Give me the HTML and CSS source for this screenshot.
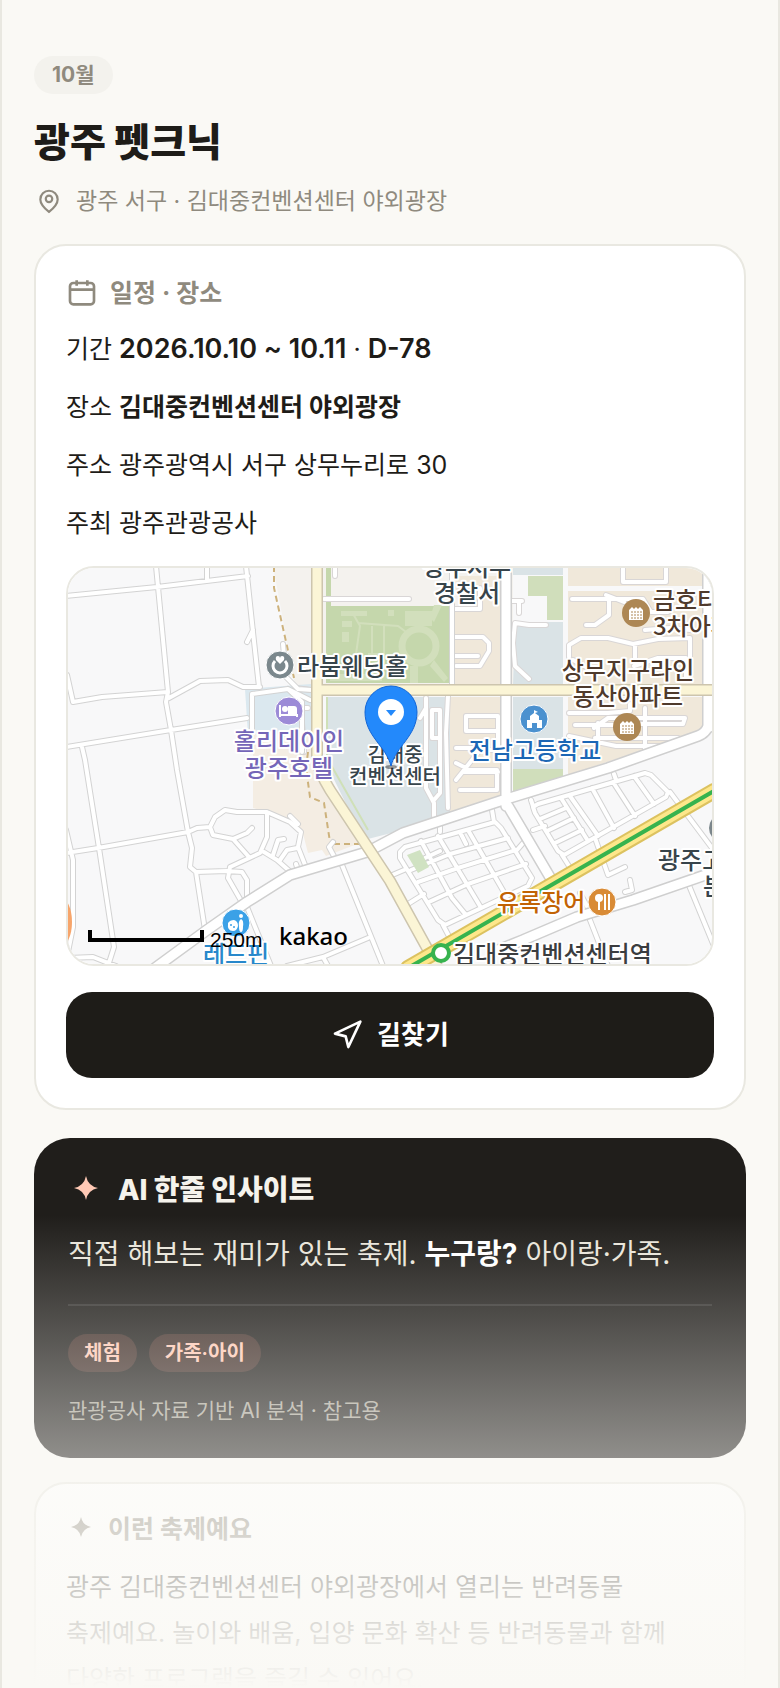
FILE: index.html
```html
<!DOCTYPE html>
<html lang="ko">

<head>
    <meta charset="UTF-8">
    <meta name="viewport" content="width=device-width, initial-scale=1.0">
    <title>광주 펫크닉</title>
    <link rel="stylesheet" href="styles.css">
</head>

<body>

    <main class="screen">
        <header class="hero">
            <span class="month">10월</span>
            <h1 class="title">광주 펫크닉</h1>
            <p class="place">
                <svg class="place-icon" viewBox="0 0 24 24"><path d="M20 10.500c0 5-5.500 9.500-8 11.500-2.500-2-8-6.500-8-11.500a8 8 0 0 1 16 0z"/><circle cx="12" cy="10" r="3"/></svg>
                광주 서구 · 김대중컨벤션센터 야외광장
            </p>
        </header>

        <section class="card">
            <h2 class="card-head">
                <svg class="card-icon" viewBox="0 0 24 24"><rect x="3" y="4.500" width="18" height="16" rx="2.500"/><path d="M8 2.500v4M16 2.500v4M3 9.500h18"/></svg>
                일정 · 장소
            </h2>
            <div class="rows">
                <p>기간 <b class="date">2026.10.10 ~ 10.11</b> · <b class="date">D-78</b></p>
                <p>장소 <b>김대중컨벤션센터 야외광장</b></p>
                <p>주소 광주광역시 서구 상무누리로 30</p>
                <p>주최 광주관광공사</p>
            </div>

            <div class="map">
                <svg class="map-svg" viewBox="0 0 644 396" preserveAspectRatio="xMidYMid slice">
                    <defs>
                        <!-- narrow streets, west side -->
                        <path id="west" d="M-2 28L89 19L180 8M88-2L100 124L98 134L103 162L109 202L120 264L124 280L122 299L128 304L137 362M139-2V12M178-2L185 64L191 119M185 62L179 74M-1 107L5 134L34 129L100 124M101 130L132 113L160 112L175 119H192M-2 179L103 162L179 150M14 179L17 192L31 280L46 379L40 398M-2 285L30 280L120 264L129 260L142 259L147 249L157 242L169 244L199 244L222 254L233 264L230 279L239 302M-2 262L5 292L5 359L0 384M199 244V269L192 285L162 299L160 310L176 338M142 259L145 267L165 271L181 289M165 271L179 265L184 260M196 284L209 292L226 307M205 287L210 272L216 271M212 292L219 282L229 280M228 296L230 302M128 304L159 303L174 304L179 312V332M274 297L315 398M179 339L203 398M219 398L255 389L300 370M255 389L260 398M265 274L261 279L268 292M-2 390L25 389L48 398M222 248L230 256M215 76L216 88"/>
                        <!-- apartment block lanes -->
                        <path id="lanes" d="M267-2V8M256 31H338M256 31H341M386 41H412M412 41V20M386 69H415L421 75V83L412 98H388M386 88H410M454 33H444M451 33V45M478 57H461L447 55L445 75L447 98L461 111M555-2V14H598V-2M504 31H575L583 44H600M541 31V47L527 57H518M538 27L556 34M577 62L602 60L622 62M501 89V77L513 70H540L565 76L590 71L622 70V112M567 76V90M505 92L520 100M566 98L590 90H618V110M358 130V220L366 235V248M352 150L358 140M364 142H372V225L366 232M364 142V170H372M380 128L378 165L380 240M399 148H430V163H398V148M430 163V190M388 180H405M388 212L412 182H430M396 204H430M388 195L402 202H429V222H392M501 145H540L562 143V136M507 157H560M530 155V175M501 168L548 178H600M526 160L540 150H617L615 156H560M577 140V188M527 170H610M240 140H233L236 184M228 120L242 122"/>
                        <!-- housing grids south of the main road -->
                        <path id="grid" d="M332 284L337 279L427 254L433 260L464 310L460 318L377 357L370 352L332 290ZM353 273L384 330L398 347M370 268L412 338M400 262L437 326M357 290L372 283M343 302L382 286L440 270M350 314L390 300L448 282M361 334L400 316L458 296M392 264L398 276M372 264V258M426 254L424 242M322 308L336 302M340 336L356 326M449 282L456 274M465 239L470 236L577 205L583 207L600 224L598 229L496 287L490 283L467 245ZM493 230L520 273M502 228L530 268M524 220L546 260M545 214L567 248M566 208L586 236M472 251L498 240M479 263L506 250M487 275L514 262M465 238L463 232M465 262L477 258M548 212L546 206M494 287L506 306M527 270L540 307L557 299M557 324L564 322L562 312M375 357L384 374M522 352L540 398M620 315L646 378M602 224L644 280M512 325L520 340"/>
                        <!-- wide white roads -->
                        <path id="wide" d="M87 400L139 362L179 334L222 307L299 284L335 265L435 232L540 200L630 168Q638 165 640 158L640-2M438-2V238M440 238L486 316M425 384L455 372L509 349L565 332L646 304M640 160L648 155"/>
                        <path id="hotel" d="M184 162V126L220 121L242 132M220 121L234 134V184M217 108L230 121L244 122"/>
                        <g id="apt"><circle r="14"/><path fill="#fff" d="M-7-3l3-3 2 2 2-2 2 2 2-2 3 3v10H-7z"/><path d="M-5-1H6M-5 2H6M-5 5H6" stroke="#ad8754" stroke-width="1" stroke-dasharray="2 1"/></g>
                    </defs>

                    <rect width="644" height="396" fill="#f8f8f9"/>
                    <path d="M205-2H445V119H250V230L228 122Z" fill="#f4f2ee"/>
                    <path d="M185 165L244 140L250 200L292 275L258 288L254 282L240 285L234 262L199 244L185 240Z" fill="#f4ede3"/>
                    <path d="M177 121L243 116V165L180 167Z" fill="#dbe8ef"/>
                    <path d="M258 38H381V115H258ZM258-2H263V38H258Z" fill="#c5d7ac"/>
                    <g fill="#d2dfbc">
                        <path d="M273 43H299V48H273ZM337 43H364V58H337ZM320 42h6v6h-6zM274 53h10v6h-10zM274 64h7v10h-7zM262 106H314V113H262Z"/>
                        <path d="M366 37H374L366 54L362 50ZM342 98H350V115H342ZM366 92L380 110L376 114L362 98Z"/>
                    </g>
                    <path d="M284 44L292 58L288 86M290 55L330 58L338 64M304 58V90M316 58V86H300" fill="none" stroke="#d2dfbc" stroke-width="2"/>
                    <circle cx="351" cy="78" r="17" fill="none" stroke="#d2dfbc" stroke-width="7"/>
                    <path d="M258 129H388L382 247L335 262L296 272L280 240L258 195Z" fill="#dae3e6"/>
                    <path d="M259 129V190L300 262" fill="none" stroke="#cfe0b8" stroke-width="2"/>
                    <path d="M382 40H433V116H382ZM382 8H433V40H395ZM382 129H433V228L382 244ZM500-2H636V18H500ZM500 23H636V116H500ZM500 129H636V162L500 207Z" fill="#f0e8da"/>
                    <path d="M445-2H495V7H445ZM447 54H495V116H445ZM445 129H495V201H445Z" fill="#dae3e6"/>
                    <path d="M460 8H495V52H479V28H460ZM445 201H495V209L445 225Z" fill="#d0debb"/>
                    <path d="M206-2V20L219 78L226 110M240 184L238 200L242 229L256 235L262 274M266 276H292" fill="none" stroke="#cdb27c" stroke-width="2" stroke-dasharray="6 4"/>

                    <use href="#west" class="road casing-s"/>
                    <use href="#west" class="road fill-s"/>
                    <use href="#lanes" class="road casing-s lane"/>
                    <use href="#lanes" class="road fill-s"/>
                    <use href="#grid" class="road casing-s"/>
                    <use href="#grid" class="road fill-s"/>
                    <path d="M339 287L352 282L361 299L350 305Z" fill="#d0e2c2"/>
                    <path d="M384-2V116" class="road casing-s"/><path d="M384-2V116" class="road fill-s"/>
                    <use href="#hotel" class="road casing-s"/>
                    <use href="#hotel" class="road fill-s"/>
                    <use href="#wide" class="road casing-w"/>
                    <use href="#wide" class="road fill-w"/>

                    <path d="M249-2V192Q250 202 262 222L322 313L370 400M249 122H646" class="road" stroke="#cdc5ae" stroke-width="12"/>
                    <path d="M249-2V192Q250 202 262 222L322 313L370 400M249 122H646" class="road" stroke="#fbf5d6" stroke-width="9"/>
                    <path d="M340 400L646 223" class="road" stroke="#dcc260" stroke-width="16"/>
                    <path d="M340 400L646 223" class="road" stroke="#fee78b" stroke-width="12"/>
                    <path d="M340 400L646 223" class="road" stroke="#37b34e" stroke-width="4"/>
                    <ellipse cx="-7" cy="354" rx="11" ry="24" fill="#f7a56b"/>
                    <circle cx="655" cy="260" r="14" fill="#7b868b"/>

                    <g class="poi">
                        <g transform="translate(212 97)" fill="#7b888d"><circle r="14"/><path d="M-5-4A7 7 0 1 0 5-4" fill="none" stroke="#fff" stroke-width="3"/><path d="M0-1L-4-5Q-5-9-2-9Q0-9 0-7Q0-9 2-9Q5-9 4-5Z" fill="#fff"/></g>
                        <g transform="translate(221 143)" fill="#9c8bd7"><circle r="14"/><path d="M-9-6V6M-9 4H8V6" fill="none" stroke="#fff" stroke-width="2"/><circle cx="-4" cy="-2" r="3" fill="#fff"/><path d="M-1-5H5Q8-5 8-2V3H-1Z" fill="#fff"/></g>
                        <g transform="translate(466 151)" fill="#4b91cf"><circle r="14"/><path d="M-7 9V1H-4V-3L0-6V-9L4-7L1-6L5-3V1H8V9H3V4H-2V9Z" fill="#fff"/></g>
                        <use href="#apt" x="568" y="45" fill="#ad8754"/>
                        <use href="#apt" x="559" y="159" fill="#ad8754"/>
                        <g transform="translate(534 334)" fill="#d98b36"><circle r="14"/><circle cx="-3" cy="-4" r="4" fill="#fff"/><path d="M-3-2V8M3-8V8M7-8V8" stroke="#fff" stroke-width="2"/></g>
                        <g transform="translate(168 355)" fill="#3ba1e7"><circle r="14"/><path d="M-8 0Q-6-3-2-3Q2-2 2 3Q1 8-3 8Q-9 8-8 0ZM5-9a2 2 0 0 1 0 4a2 2 0 0 1 0-4ZM5-4Q8-3 7 4Q7 9 5 9Q3 9 3 4Q2-2 5-4Z" fill="#fff"/><circle cx="-5" cy="2" r="1"/><circle cx="-2" cy="4" r="1"/></g>
                        <circle cx="373" cy="385" r="8" class="station"/>
                    </g>

                    <g class="label">
                        <text x="229" y="107">라붐웨딩홀</text>
                        <text x="399" y="8" text-anchor="middle">광주서부</text>
                        <text x="399" y="34" text-anchor="middle">경찰서</text>
                        <text x="590" y="301">광주고</text>
                        <text x="635" y="327">분</text>
                        <text x="385" y="395" fill="#3b3d40">김대중컨벤션센터역</text>
                        <g fill="#4f3a2c">
                            <text x="585" y="41">금호타운</text>
                            <text x="585" y="67">3차아파트</text>
                            <text x="560" y="111" text-anchor="middle">상무지구라인</text>
                            <text x="560" y="137" text-anchor="middle">동산아파트</text>
                        </g>
                        <g fill="#7566b8" text-anchor="middle">
                            <text x="221" y="182">홀리데이인</text>
                            <text x="221" y="209">광주호텔</text>
                        </g>
                        <text x="467" y="191" text-anchor="middle" fill="#1c67b5">전남고등학교</text>
                        <text x="429" y="343" fill="#c26304">유록장어</text>
                        <text x="168" y="395" text-anchor="middle" fill="#2888cb">레드핀</text>
                        <g class="label-s" text-anchor="middle">
                            <text x="327" y="194">김대중</text>
                            <text x="327" y="216">컨벤션센터</text>
                        </g>
                    </g>

                    <ellipse cx="323" cy="199" rx="6" ry="2" fill="#000" opacity=".4"/>
                    <path d="M323 198C318 178 297 168 297 144A26 26 0 0 1 349 144C349 168 328 178 323 198Z" fill="#2389fb" stroke="#1466d6"/>
                    <circle cx="323" cy="144" r="13" fill="#fff"/>
                    <path d="M318 142H328L323 148Z" fill="#2389fb"/>

                    <path d="M22 362V372H134V362" fill="none" stroke="#000" stroke-width="4"/>
                    <text x="142" y="379" class="scale">250m</text>
                    <text x="211" y="377" class="kakao">kakao</text>
                </svg>
            </div>

            <button class="route-btn" type="button">
                <svg class="route-icon" viewBox="0 0 24 24"><path d="M3 11L22 2L13 21L11 13Z"/></svg>
                길찾기
            </button>
        </section>

        <section class="insight">
            <h2 class="insight-head">
                <svg class="spark" viewBox="0 0 24 24"><path d="M12 0Q14 10 24 12Q14 14 12 24Q10 14 0 12Q10 10 12 0Z"/></svg>
                AI 한줄 인사이트
            </h2>
            <p class="insight-text">직접 해보는 재미가 있는 축제. <b>누구랑?</b> 아이랑·가족.</p>
            <div class="tags">
                <span class="tag">체험</span>
                <span class="tag">가족·아이</span>
            </div>
            <p class="note">관광공사 자료 기반 AI 분석 · 참고용</p>
        </section>

        <section class="card about">
            <h2 class="card-head">
                <svg class="spark spark-s" viewBox="0 0 24 24"><path d="M12 0Q14 10 24 12Q14 14 12 24Q10 14 0 12Q10 10 12 0Z"/></svg>
                이런 축제예요
            </h2>
            <p class="about-text">광주 김대중컨벤션센터 야외광장에서 열리는 반려동물 축제예요. 놀이와 배움, 입양 문화 확산 등 반려동물과 함께 다양한 프로그램을 즐길 수 있어요.</p>
        </section>

        <div class="fade"></div>
    </main>

</body>

</html>
```
FILE: styles.css
```css
* {
    box-sizing: border-box;
}

body {
    margin: 0;
    background: #faf9f5;
    color: #1e1c18;
    font-family: Inter, "Noto Sans CJK KR", sans-serif;
    font-size: 25px;
}

h1, h2, p {
    margin: 0;
}

.screen {
    position: relative;
    height: 100vh;
    overflow: hidden;
    padding: 56px 32px 0;
    border: solid #e9e8e1;
    border-width: 0 2px;
}

/* header */
.hero {
    display: flex;
    flex-direction: column;
    align-items: flex-start;
    margin-bottom: 25px;
}

.month {
    padding: 0 18px;
    border-radius: 19px;
    background: #f3f2ed;
    color: #8f8a7e;
    font-size: 21px;
    font-weight: 700;
    line-height: 38px;
}

.title {
    margin-top: 24px;
    font-size: 39px;
    font-weight: 800;
    line-height: 48px;
}

.place {
    display: flex;
    align-items: center;
    gap: 14px;
    margin-top: 17px;
    padding-left: 2px;
    color: #8f8a7e;
    font-size: 23px;
    line-height: 36px;
}

.place-icon {
    width: 26px;
    height: 26px;
    fill: none;
    stroke: currentColor;
    stroke-width: 2;
}

/* cards */
.card {
    padding: 30px;
    border: 2px solid #e9e8e1;
    border-radius: 32px;
    background: #fff;
}

.card-head {
    display: flex;
    align-items: center;
    gap: 12px;
    color: #8f8a7e;
    font-size: 25px;
    font-weight: 700;
    line-height: 34px;
}

.card-icon {
    width: 32px;
    height: 32px;
    fill: none;
    stroke: currentColor;
    stroke-width: 2;
}

.rows {
    display: flex;
    flex-direction: column;
    gap: 14px;
    margin: 17px 0 21px;
    line-height: 44px;
}

.rows b {
    font-weight: 700;
}

.rows .date {
    font-size: 27px;
    font-weight: 600;
}

.map {
    height: 400px;
    margin-bottom: 26px;
    border: 2px solid #e9e8e1;
    border-radius: 28px;
    overflow: hidden;
}

.map-svg {
    display: block;
    width: 100%;
    height: 100%;
}

.road {
    fill: none;
    stroke-linecap: round;
    stroke-linejoin: round;
}

.casing-s {
    stroke: #d3d3d3;
    stroke-width: 6px;
}

.lane {
    stroke: #d9d6d6;
}

.fill-s {
    stroke: #fff;
    stroke-width: 4px;
}

.casing-w {
    stroke: #cfcfcf;
    stroke-width: 12px;
}

.fill-w {
    stroke: #fff;
    stroke-width: 9px;
}

.poi > * > circle:first-child {
    stroke: #fff;
    stroke-width: 1px;
}

.station {
    fill: #fff;
    stroke: #37b34e;
    stroke-width: 4px;
}

.label {
    fill: #37444b;
    font-family: "Noto Sans CJK KR", sans-serif;
    font-size: 24px;
    font-weight: 500;
    stroke: #fff;
    stroke-width: 4px;
    stroke-linejoin: round;
    paint-order: stroke;
}

.label-s {
    font-size: 20px;
}

.scale {
    font-family: "Liberation Sans", sans-serif;
    font-size: 21px;
}

.kakao {
    font-family: "Noto Sans", sans-serif;
    font-size: 24px;
    font-weight: 500;
}

.route-btn {
    display: flex;
    align-items: center;
    justify-content: center;
    gap: 14px;
    width: 100%;
    height: 86px;
    padding: 0;
    border: none;
    border-radius: 26px;
    background: #1e1c18;
    color: #fff;
    font-family: inherit;
    font-size: 26px;
    font-weight: 700;
    line-height: 36px;
    cursor: pointer;
}

.route-icon {
    width: 32px;
    height: 32px;
    fill: none;
    stroke: currentColor;
    stroke-width: 2;
    stroke-linejoin: round;
}

/* AI insight */
.insight {
    margin: 28px 0 24px;
    padding: 34px 34px 32px;
    border-radius: 36px;
    background: #201e1b;
    color: #e9e5da;
}

.insight-head {
    display: flex;
    align-items: center;
    gap: 20px;
    padding-left: 6px;
    color: #f5f3ec;
    font-size: 28px;
    font-weight: 800;
    line-height: 36px;
}

.spark {
    width: 24px;
    height: 24px;
    margin-bottom: 4px;
    fill: #ffc9b5;
}

.insight-text {
    margin: 22px 0 26px;
    font-size: 28px;
    line-height: 48px;
}

.insight-text b {
    color: #fff;
    font-weight: 700;
}

.tags {
    display: flex;
    gap: 12px;
    padding-top: 28px;
    border-top: 2px solid rgba(255, 255, 255, .1);
}

.tag {
    padding: 0 16px;
    border-radius: 19px;
    background: rgba(255, 150, 130, .15);
    color: #ffc9b5;
    font-size: 20px;
    font-weight: 600;
    line-height: 38px;
}

.note {
    margin-top: 24px;
    color: #a8a498;
    font-size: 21px;
    line-height: 30px;
}

.about {
    padding-top: 28px;
}

.about .card-head {
    gap: 17px;
    padding-left: 5px;
}

.spark-s {
    width: 20px;
    height: 20px;
    fill: #8f8a7e;
}

.about-text {
    margin-top: 18px;
    line-height: 46px;
    word-break: keep-all;
}

/* content dissolves into the page colour */
.fade {
    position: absolute;
    right: 0;
    bottom: 0;
    left: 0;
    height: 28vh;
    background: linear-gradient(rgba(250, 249, 245, 0), #faf9f5);
}
```
